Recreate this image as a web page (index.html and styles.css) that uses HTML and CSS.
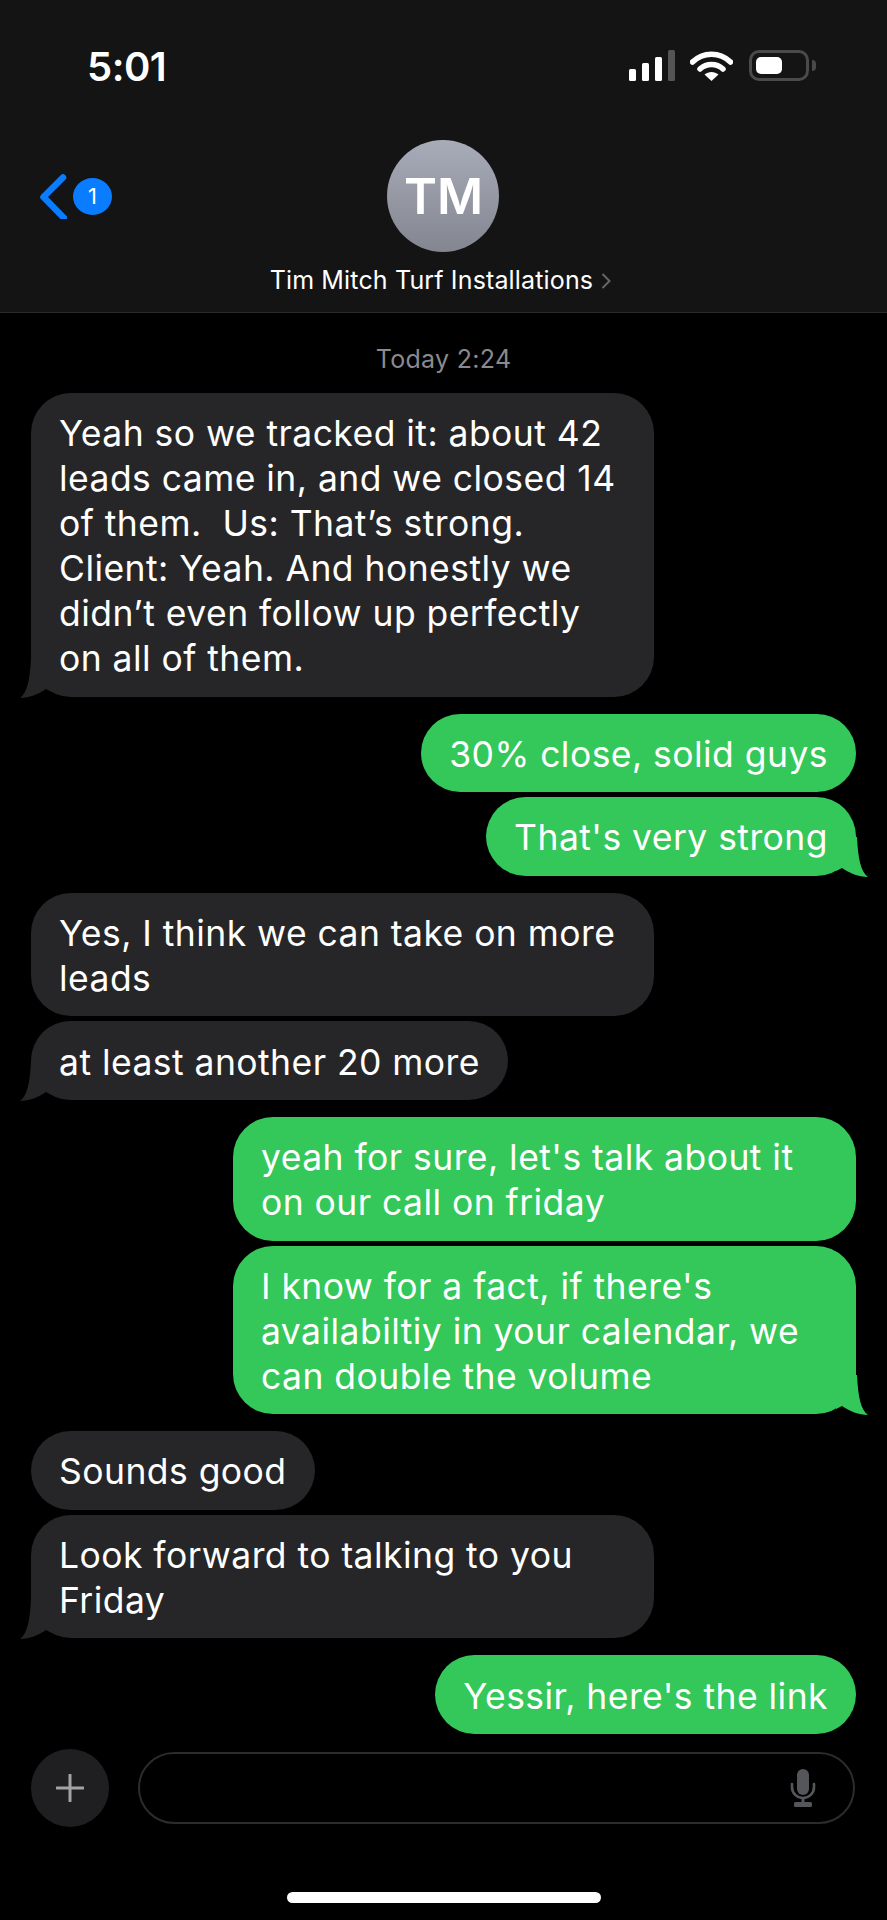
FILE: index.html
```html
<!DOCTYPE html>
<html lang="en">
<head>
  <meta charset="UTF-8">
  <title>Tim Mitch Turf Installations</title>
  <link rel="stylesheet" href="styles.css">
</head>
<body>
<div class="phone">
  <header class="top">
    <div class="status">
      <div class="time">5:01</div>
      <div class="status-icons">
        <svg class="signal" width="46" height="31" viewBox="0 0 46 31">
          <rect x="0" y="19" width="7" height="12" rx="1.5" fill="#fff"/>
          <rect x="13" y="13" width="7" height="18" rx="1.5" fill="#fff"/>
          <rect x="26" y="7" width="7" height="24" rx="1.5" fill="#fff"/>
          <rect x="39" y="0" width="7" height="31" rx="1.5" fill="#555"/>
        </svg>
        <svg class="wifi" width="43" height="31" viewBox="0 0 43 31">
          <path d="M2.5 12 C13 1.5 30 1.5 40.5 12" fill="none" stroke="#fff" stroke-width="5.5" stroke-linecap="round"/>
          <path d="M10 19 C16.5 13 26.5 13 33 19" fill="none" stroke="#fff" stroke-width="5.5" stroke-linecap="round"/>
          <path d="M14.5 24.5 C18.5 21 24.5 21 28.5 24.5 L21.5 31 Z" fill="#fff"/>
        </svg>
        <div class="battery">
          <div class="battery-level"></div>
        </div>
        <div class="battery-nub"></div>
      </div>
    </div>
    <div class="nav">
      <div class="back">
        <svg width="28" height="45" viewBox="0 0 28 45">
          <path d="M24 3.5 L4.5 23 L26 45" fill="none" stroke="#0a7cff" stroke-width="6.5" stroke-linecap="round" stroke-linejoin="round"/>
        </svg>
        <span class="badge">1</span>
      </div>
      <div class="contact">
        <div class="avatar">TM</div>
        <div class="name">Tim Mitch Turf Installations
          <svg class="name-arrow" width="10" height="16" viewBox="0 0 10 16">
            <path d="M1.5 1 L8.5 8 L1.5 15" fill="none" stroke="#666" stroke-width="2"/>
          </svg>
        </div>
      </div>
    </div>
  </header>

  <main class="thread">
    <div class="stamp">Today 2:24</div>

    <div class="msg in tail">Yeah so we tracked it: about 42 leads came in, and we closed 14 of them.  Us: That’s strong. Client: Yeah. And honestly we didn’t even follow up perfectly on all of them.<svg class="tail-shape" width="32" height="40" viewBox="0 0 32 40"><path d="M32 0 L32 34 L26 31 C19 36 9 40 0 40 C7 35 10 22 11 0 Z"/></svg></div>

    <div class="msg out group">30% close, solid guys</div>
    <div class="msg out tail">That's very strong<svg class="tail-shape" width="32" height="40" viewBox="0 0 32 40"><path d="M0 0 L0 34 L6 31 C13 36 23 40 32 40 C25 35 22 22 21 0 Z"/></svg></div>

    <div class="msg in group">Yes, I think we can take on more leads</div>
    <div class="msg in tail">at least another 20 more<svg class="tail-shape" width="32" height="40" viewBox="0 0 32 40"><path d="M32 0 L32 34 L26 31 C19 36 9 40 0 40 C7 35 10 22 11 0 Z"/></svg></div>

    <div class="msg out group">yeah for sure, let's talk about it on our call on friday</div>
    <div class="msg out tail">I know for a fact, if there's availabiltiy in your calendar, we can double the volume<svg class="tail-shape" width="32" height="40" viewBox="0 0 32 40"><path d="M0 0 L0 34 L6 31 C13 36 23 40 32 40 C25 35 22 22 21 0 Z"/></svg></div>

    <div class="msg in group">Sounds good</div>
    <div class="msg in tail">Look forward to talking to you Friday<svg class="tail-shape" width="32" height="40" viewBox="0 0 32 40"><path d="M32 0 L32 34 L26 31 C19 36 9 40 0 40 C7 35 10 22 11 0 Z"/></svg></div>

    <div class="msg out group">Yessir, here's the link</div>
  </main>

  <footer class="composer">
    <div class="plus">
      <svg width="28" height="28" viewBox="0 0 28 28">
        <path d="M14 1 V27 M1 14 H27" stroke="#a3a3a5" stroke-width="3" stroke-linecap="round"/>
      </svg>
    </div>
    <div class="input">
      <svg width="26" height="38" viewBox="0 0 26 38">
        <rect x="7" y="0" width="12" height="26" rx="6" fill="#55565a"/>
        <path d="M2 15 V18 C2 24.5 7 29 13 29 C19 29 24 24.5 24 18 V15" fill="none" stroke="#55565a" stroke-width="2.6" stroke-linecap="round"/>
        <path d="M13 29 V34" stroke="#55565a" stroke-width="3"/>
        <rect x="4" y="33" width="18" height="5" rx="1.5" fill="#55565a"/>
      </svg>
    </div>
  </footer>

  <div class="home-row">
    <div class="home-bar"></div>
  </div>
</div>
</body>
</html>
```

FILE: styles.css
```css
* {
  box-sizing: border-box;
}
body {
  margin: 0;
  background: #000;
  font-family: Inter, 'Noto Sans', sans-serif;
  color: #fff;
}
.phone {
  width: 887px;
  height: 1920px;
  display: flex;
  flex-direction: column;
  overflow: hidden;
}

/* header */
.top {
  height: 313px;
  flex-shrink: 0;
  background: #141414;
  border-bottom: 1px solid #2a2a2a;
}
.status {
  height: 140px;
  padding: 50px 71px 0 87px;
  display: flex;
  justify-content: space-between;
  align-items: flex-start;
}
.time {
  font-size: 40px;
  font-weight: 600;
  line-height: 34px;
  letter-spacing: -0.5px;
}
.status-icons {
  display: flex;
  align-items: flex-start;
}
.wifi {
  margin-left: 15px;
}
.battery {
  width: 60px;
  height: 31px;
  margin-left: 16px;
  padding: 4px;
  border: 3px solid #4a4a4a;
  border-radius: 10px;
}
.battery-level {
  width: 26px;
  height: 100%;
  background: #fff;
  border-radius: 5px;
}
.battery-nub {
  width: 4px;
  height: 11px;
  margin: 10px 0 0 3px;
  background: #4a4a4a;
  border-radius: 0 4px 4px 0;
}
.nav {
  display: grid;
  grid-template-columns: 1fr auto 1fr;
  padding-left: 39px;
}
.back {
  height: 112px;
  display: flex;
  align-items: center;
  gap: 6px;
}
.badge {
  width: 39px;
  height: 37px;
  border-radius: 50%;
  background: #0a7cff;
  font-size: 22px;
  line-height: 37px;
  text-align: center;
}
.contact {
  display: flex;
  flex-direction: column;
  align-items: center;
  margin-left: -39px;
}
.avatar {
  width: 112px;
  height: 112px;
  border-radius: 50%;
  background: linear-gradient(#a8acb9, #83868f);
  font-size: 50px;
  font-weight: 600;
  line-height: 112px;
  text-align: center;
}
.name {
  margin: 13px 6px 0 0;
  font-size: 25px;
  letter-spacing: 0.15px;
  line-height: 30px;
  white-space: nowrap;
}
.name-arrow {
  margin-left: 1px;
}

/* messages */
.thread {
  flex: 1;
  min-height: 0;
  padding: 0 31px;
  display: flex;
  flex-direction: column;
  align-items: flex-start;
}
.stamp {
  align-self: center;
  margin: 30px 0 18px;
  font-size: 25px;
  letter-spacing: 0.3px;
  line-height: 32px;
  color: #8a8a8e;
}
.msg {
  position: relative;
  max-width: 623px;
  margin-bottom: 5px;
  padding: 18.3px 28px 15.3px;
  border-radius: 40px;
  font-size: 35.5px;
  letter-spacing: 0.45px;
  line-height: 45px;
  white-space: pre-wrap;
}
.in {
  background: #262628;
}
.out {
  align-self: flex-end;
  background: #34c759;
}
.tail {
  margin-bottom: 17px;
}
.tail-shape {
  position: absolute;
  bottom: -1px;
}
.in .tail-shape {
  left: -11px;
  fill: #262628;
}
.out .tail-shape {
  right: -12px;
  fill: #34c759;
}

/* bottom */
.composer {
  display: flex;
  align-items: center;
  flex-shrink: 0;
  gap: 29px;
  height: 78px;
  padding: 0 32px 0 31px;
}
.plus {
  width: 78px;
  height: 78px;
  flex-shrink: 0;
  border-radius: 50%;
  background: #1f1f21;
  display: flex;
  align-items: center;
  justify-content: center;
}
.input {
  flex: 1;
  height: 72px;
  padding-right: 37px;
  border: 2px solid #2c2c2e;
  border-radius: 36px;
  display: flex;
  align-items: center;
  justify-content: flex-end;
}
.home-row {
  height: 93px;
  flex-shrink: 0;
  padding-top: 65px;
}
.home-bar {
  width: 314px;
  height: 11px;
  margin: 0 auto;
  background: #fff;
  border-radius: 6px;
}
```
